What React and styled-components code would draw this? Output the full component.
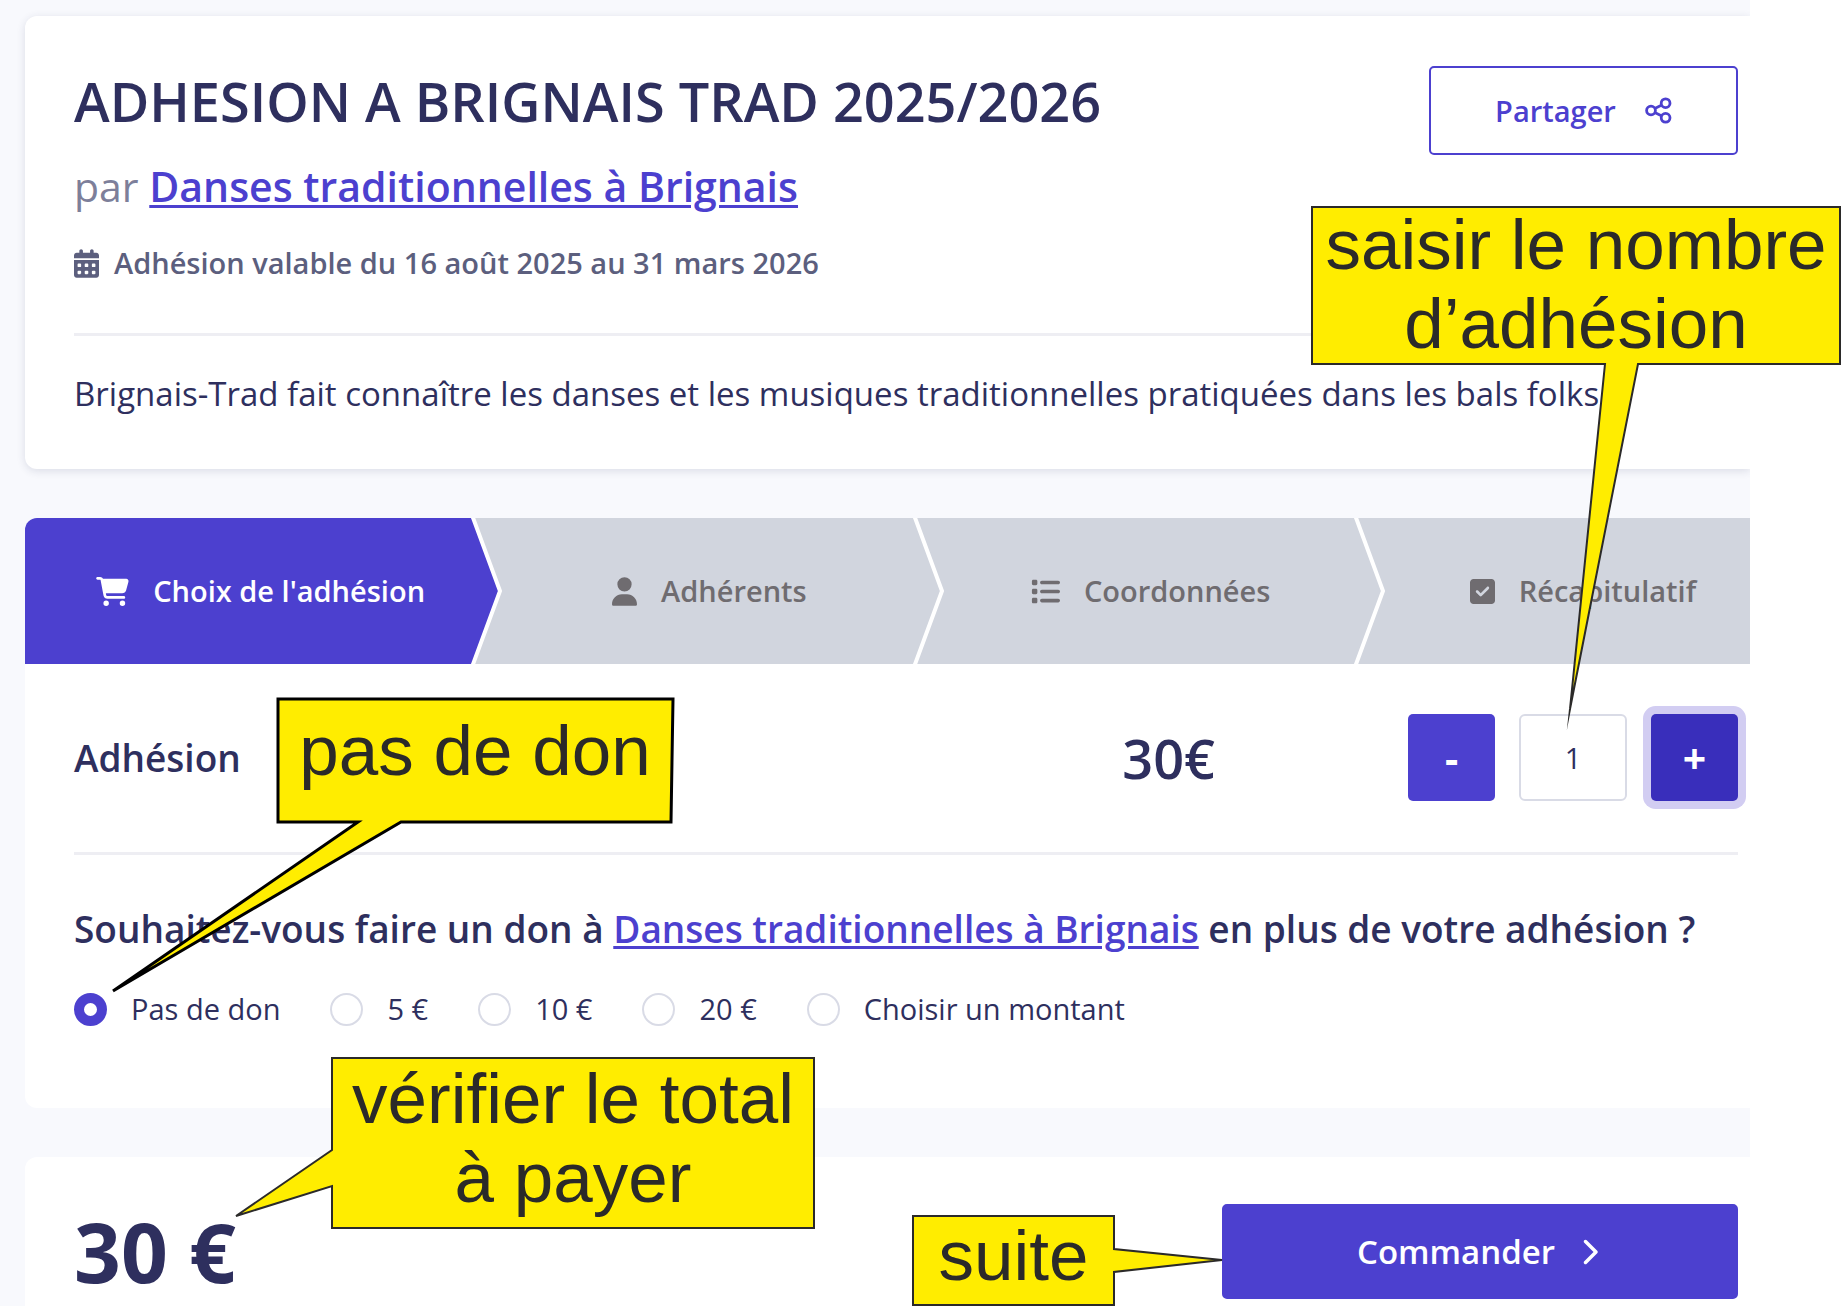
import React, { useState } from "react";
import styled, { createGlobalStyle } from "styled-components";
import {
  FaCalendarDays,
  FaCartShopping,
  FaChevronRight,
  FaList,
  FaSquareCheck,
  FaUser
} from "react-icons/fa6";

const colors = {
  primary: "#4c40cf",
  primaryDark: "#392ebb",
  ring: "#d2cdf2",
  text: "#2e2f5e",
  muted: "#7d7f9a",
  secondary: "#5c5f7e",
  page: "#f8f9fd",
  line: "#eeeef3",
  border: "#d9dbe6",
  step: "#d1d5de",
  stepText: "#6f6c70",
  note: "#ffed00",
  noteText: "#2b2a29"
};

const GlobalStyle = createGlobalStyle`
  *, *::before, *::after {
    box-sizing: border-box;
  }
  body {
    margin: 0;
    background-color: white;
    color: ${colors.text};
    font-family: "Open Sans", "Noto Sans", sans-serif;
    font-size: 29px;
    line-height: 38px;
  }
  button, input {
    font-family: inherit;
    font-size: inherit;
  }
`;

const Page = styled.main`
  position: relative;
  padding-right: 95px;
  overflow: hidden;
`;

const Content = styled.div`
  display: flex;
  flex-direction: column;
  gap: 49px;
  padding: 16px 0 0 25px;
  background-color: ${colors.page};
  overflow: hidden;
`;

const Card = styled.section`
  padding: 50px 12px 52px 49px;
  background-color: white;
  border-radius: 12px 0 0 12px;
  box-shadow: 0 2px 8px rgba(46, 47, 94, 0.14);
`;

const Header = styled.header`
  display: flex;
  align-items: flex-start;
  justify-content: space-between;
`;

const Title = styled.h1`
  margin: 0;
  font-size: 54px;
  font-weight: 600;
  line-height: 70px;
`;

const Organizer = styled.p`
  margin: 4px 0 0;
  color: ${colors.muted};
  font-size: 41px;
  line-height: 54px;
`;

const Link = styled.a`
  color: ${colors.primary};
  font-weight: 600;
  text-decoration-thickness: 3px;
  text-underline-offset: 3px;
`;

const Icon = styled.span`
  display: flex;
  svg {
    width: ${({ $width }) => $width}px;
    height: 29px;
  }
`;

const Validity = styled.p`
  display: flex;
  align-items: center;
  gap: 15px;
  margin: 31px 0 0;
  color: ${colors.secondary};
  font-weight: 600;
`;

const Divider = styled.hr`
  height: 3px;
  margin: 51px 0 0;
  border: 0;
  background-color: ${colors.line};
`;

const Description = styled.p`
  margin: 35px 0 0;
  font-size: 33px;
  line-height: 46px;
`;

const Button = styled.button`
  display: flex;
  align-items: center;
  justify-content: center;
  gap: ${({ $size }) => ($size === "large" ? "20px" : "29px")};
  height: ${({ $size }) => ($size === "large" ? "95px" : "89px")};
  width: ${({ $size }) => ($size === "large" ? "516px" : "309px")};
  padding: 0;
  color: ${({ $outline }) => ($outline ? colors.primary : "white")};
  font-size: ${({ $size }) => ($size === "large" ? "33px" : "29px")};
  font-weight: 600;
  background-color: ${({ $outline }) => ($outline ? "white" : colors.primary)};
  border: 2px solid ${colors.primary};
  border-radius: 5px;
`;

const Order = styled.section`
  padding-bottom: 80px;
  background-color: white;
  border-radius: 12px 0 0 12px;
`;

const StepList = styled.ol`
  display: grid;
  grid-template-columns: 11fr 11fr 11fr 10fr;
  margin: 0;
  padding: 0;
  list-style: none;
  border-top-left-radius: 12px;
  overflow: hidden;
`;

const StepItem = styled.li`
  position: relative;
  display: flex;
  align-items: center;
  justify-content: center;
  gap: 24px;
  height: 146px;
  padding-left: ${({ $indent }) => $indent}px;
  color: ${({ $active }) => ($active ? "white" : colors.stepText)};
  font-weight: 600;
  background-color: ${({ $active }) =>
    $active ? colors.primary : colors.step};
`;

const Chevron = styled.svg`
  position: absolute;
  top: 0;
  left: 100%;
  z-index: 1;
  width: 40px;
  height: 146px;
`;

const OrderBody = styled.div`
  padding: 50px 12px 0 49px;
`;

const TierRow = styled.div`
  display: flex;
  align-items: center;
`;

const TierName = styled.h2`
  flex: 1;
  margin: 0;
  font-size: 37px;
  font-weight: 600;
  line-height: 50px;
`;

const Price = styled.strong`
  margin-right: 193px;
  font-size: 54px;
  font-weight: 600;
  line-height: 70px;
`;

const Quantity = styled.div`
  display: flex;
  gap: 24px;
`;

const QuantityButton = styled.button`
  width: 87px;
  height: 87px;
  padding: 0;
  color: white;
  font-size: 41px;
  font-weight: 700;
  line-height: 54px;
  background-color: ${({ $focused }) =>
    $focused ? colors.primaryDark : colors.primary};
  border: 0;
  border-radius: 5px;
  box-shadow: ${({ $focused }) =>
    $focused ? `0 0 0 8px ${colors.ring}` : "none"};
`;

const QuantityInput = styled.input`
  width: 108px;
  height: 87px;
  padding: 0;
  color: ${colors.text};
  text-align: center;
  background-color: white;
  border: 2px solid ${colors.border};
  border-radius: 6px;
`;

const Donation = styled.fieldset`
  min-width: 0;
  margin: 0;
  padding: 49px 0 0;
  border: 0;
`;

const Question = styled.legend`
  float: left;
  width: 100%;
  padding: 0;
  font-size: 37px;
  font-weight: 600;
  line-height: 50px;
  white-space: nowrap;
`;

const Options = styled.div`
  clear: both;
  display: flex;
  gap: 50px;
  padding-top: 36px;
`;

const Option = styled.label`
  display: flex;
  align-items: center;
  gap: 24px;
`;

const Radio = styled.input`
  appearance: none;
  width: 33px;
  height: 33px;
  margin: 0;
  background-color: white;
  border: 2px solid ${colors.border};
  border-radius: 50%;
  &:checked {
    border: 10px solid ${colors.primary};
  }
`;

const Checkout = styled.section`
  display: flex;
  align-items: center;
  justify-content: space-between;
  padding: 47px 12px 7px 49px;
  background-color: white;
  border-top-left-radius: 12px;
`;

const Total = styled.strong`
  font-size: 82px;
  font-weight: 700;
  line-height: 95px;
`;

const Note = styled.aside`
  position: absolute;
  top: ${({ $top }) => $top}px;
  left: ${({ $left }) => ($left ? `${$left}px` : "auto")};
  right: ${({ $right }) => ($right ? `${$right}px` : "auto")};
  z-index: 2;
  width: ${({ $width }) => $width}px;
  height: ${({ $height }) => $height}px;
  padding-top: ${({ $padding }) => $padding}px;
  color: ${colors.noteText};
  font-family: "Liberation Sans", Arial, sans-serif;
  font-size: 71px;
  line-height: 79px;
  text-align: center;
  white-space: pre-line;
  pointer-events: none;
`;

const NoteText = styled.span`
  position: relative;
`;

const Bubble = styled.svg`
  position: absolute;
  top: 0;
  left: 0;
  overflow: visible;
`;

const steps = [
  {
    label: "Choix de l'adhésion",
    icon: FaCartShopping,
    iconWidth: 33,
    indent: 30
  },
  { label: "Adhérents", icon: FaUser, iconWidth: 25, indent: 45 },
  { label: "Coordonnées", icon: FaList, iconWidth: 29, indent: 45 },
  { label: "Récapitulatif", icon: FaSquareCheck, iconWidth: 25, indent: 67 }
];

const donations = ["Pas de don", "5 €", "10 €", "20 €", "Choisir un montant"];

// points are relative to the top left corner of the note
const notes = [
  {
    text: "saisir le nombre\nd’adhésion",
    top: 205,
    right: 5,
    width: 528,
    height: 159,
    padding: 0,
    miter: 30,
    points: "0,2 528,2 528,159 326,159 258,504 293,159 0,159"
  },
  {
    text: "pas de don",
    top: 699,
    left: 278,
    width: 394,
    height: 123,
    padding: 12,
    stroke: "#000",
    strokeWidth: 3,
    points: "0,0 395,0 393,123 123,123 -165,292 80,123 0,123"
  },
  {
    text: "vérifier le total\nà payer",
    top: 1058,
    left: 332,
    width: 482,
    height: 170,
    padding: 1,
    points: "0,0 482,0 482,170 0,170 0,128 -96,158 0,92"
  },
  {
    text: "suite",
    top: 1216,
    left: 913,
    width: 201,
    height: 89,
    padding: 0,
    points: "0,0 201,0 201,33 309,44 201,56 201,89 0,89"
  }
];

const ShareIcon = () => (
  <svg width="27" height="27" viewBox="0 0 27 27" aria-hidden="true">
    <g fill="none" stroke="currentColor" strokeWidth="2.8">
      <circle cx="6" cy="13.5" r="4.4" />
      <circle cx="20.6" cy="6.2" r="4.4" />
      <circle cx="20.6" cy="20.8" r="4.4" />
      <path d="M9.8 11.4 16.8 8M9.8 15.6l7 3.4" />
    </g>
  </svg>
);

const Step = ({ step, active, last }) => (
  <StepItem
    $active={active}
    $indent={step.indent}
    aria-current={active ? "step" : undefined}
  >
    <Icon $width={step.iconWidth}>
      <step.icon aria-hidden="true" />
    </Icon>
    <span>{step.label}</span>
    {!last && (
      <Chevron viewBox="0 0 40 146" aria-hidden="true">
        <path
          d="M-1 0H7L34 73 7 146H-1Z"
          fill={active ? colors.primary : colors.step}
        />
        <path
          d="M6-3 34 73 6 149"
          fill="none"
          stroke="white"
          strokeWidth="4"
        />
      </Chevron>
    )}
  </StepItem>
);

const Callout = ({ note }) => (
  <Note
    $top={note.top}
    $left={note.left}
    $right={note.right}
    $width={note.width}
    $height={note.height}
    $padding={note.padding}
  >
    <Bubble width={note.width} height={note.height} aria-hidden="true">
      <polygon
        points={note.points}
        fill={colors.note}
        stroke={note.stroke || colors.noteText}
        strokeWidth={note.strokeWidth || 2}
        strokeMiterlimit={note.miter || 4}
      />
    </Bubble>
    <NoteText>{note.text}</NoteText>
  </Note>
);

const App = () => {
  const [quantity, setQuantity] = useState(1);
  const [donation, setDonation] = useState(donations[0]);

  return (
    <>
      <GlobalStyle />
      <Page>
        <Content>
          <Card>
            <Header>
              <Title>ADHESION A BRIGNAIS TRAD 2025/2026</Title>
              <Button type="button" $outline>
                Partager
                <ShareIcon />
              </Button>
            </Header>
            <Organizer>
              par <Link href="#organisme">Danses traditionnelles à Brignais</Link>
            </Organizer>
            <Validity>
              <Icon $width={25}>
                <FaCalendarDays aria-hidden="true" />
              </Icon>
              Adhésion valable du 16 août 2025 au 31 mars 2026
            </Validity>
            <Divider />
            <Description>
              Brignais-Trad fait connaître les danses et les musiques
              traditionnelles pratiquées dans les bals folks
            </Description>
          </Card>

          <Order>
            <StepList>
              {steps.map((step, index) => (
                <Step
                  key={step.label}
                  step={step}
                  active={index === 0}
                  last={index === steps.length - 1}
                />
              ))}
            </StepList>
            <OrderBody>
              <TierRow>
                <TierName>Adhésion</TierName>
                <Price>30€</Price>
                <Quantity>
                  <QuantityButton
                    type="button"
                    aria-label="Retirer une adhésion"
                    onClick={() => setQuantity(Math.max(0, quantity - 1))}
                  >
                    -
                  </QuantityButton>
                  <QuantityInput
                    type="text"
                    inputMode="numeric"
                    aria-label="Nombre d'adhésions"
                    value={quantity}
                    onChange={e => setQuantity(Number(e.target.value) || 0)}
                  />
                  <QuantityButton
                    type="button"
                    $focused
                    aria-label="Ajouter une adhésion"
                    onClick={() => setQuantity(quantity + 1)}
                  >
                    +
                  </QuantityButton>
                </Quantity>
              </TierRow>
              <Divider />
              <Donation>
                <Question>
                  Souhaitez-vous faire un don à{" "}
                  <Link href="#organisme">
                    Danses traditionnelles à Brignais
                  </Link>{" "}
                  en plus de votre adhésion ?
                </Question>
                <Options>
                  {donations.map(label => (
                    <Option key={label}>
                      <Radio
                        type="radio"
                        name="donation"
                        checked={donation === label}
                        onChange={() => setDonation(label)}
                      />
                      {label}
                    </Option>
                  ))}
                </Options>
              </Donation>
            </OrderBody>
          </Order>

          <Checkout>
            <Total>{quantity * 30} €</Total>
            <Button type="button" $size="large">
              Commander
              <FaChevronRight size={28} aria-hidden="true" />
            </Button>
          </Checkout>
        </Content>
        {notes.map(note => (
          <Callout key={note.text} note={note} />
        ))}
      </Page>
    </>
  );
};

export default App;
